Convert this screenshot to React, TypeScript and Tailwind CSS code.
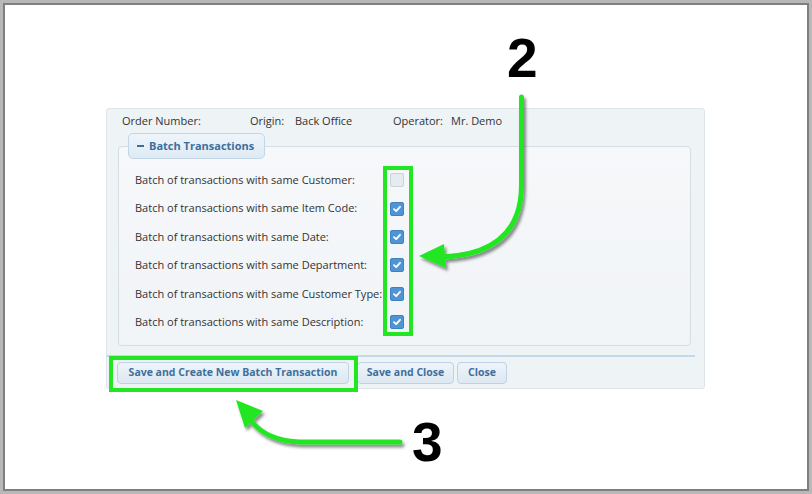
import React from 'react';

const rows = [
  { label: 'Batch of transactions with same Customer:', checked: false },
  { label: 'Batch of transactions with same Item Code:', checked: true },
  { label: 'Batch of transactions with same Date:', checked: true },
  { label: 'Batch of transactions with same Department:', checked: true },
  { label: 'Batch of transactions with same Customer Type:', checked: true },
  { label: 'Batch of transactions with same Description:', checked: true },
];

const Checkbox = ({ checked }: { checked: boolean }) =>
  checked ? (
    <span className="flex h-[14px] w-[14px] items-center justify-center rounded-[2px] bg-[#4f95d6] border border-[#3f82c2]">
      <svg width="10" height="10" viewBox="0 0 10 10">
        <path d="M2 5.2 L4.2 7.2 L8 2.8" fill="none" stroke="#fff" strokeWidth="1.8" strokeLinecap="round" strokeLinejoin="round" />
      </svg>
    </span>
  ) : (
    <span className="block h-[14px] w-[14px] rounded-[2px] bg-[#e4ebf1] border border-[#c9d3dc]" />
  );

const App = () => {
  return (
    <div className="relative h-[494px] w-[812px] overflow-hidden border-[3px] border-[#b8b8b8] bg-white font-['Open_Sans',sans-serif]">
      <div className="h-full w-full border-2 border-[#7f7f7f] pl-[101px] pt-[103px]">
        {/* Dialog panel */}
        <div className="flex h-[281px] w-[599px] flex-col rounded-[3px] border border-[#dde4ea] bg-[#eef3f6] pt-[5px] text-[11px] text-[#333]">
          <div className="flex h-[14px] items-center whitespace-nowrap pl-[15px] leading-[14px]">
            <span className="w-[128px]">Order Number:</span>
            <span className="w-[45px]">Origin:</span>
            <span className="w-[98px]">Back Office</span>
            <span className="w-[58px]">Operator:</span>
            <span>Mr. Demo</span>
          </div>

          <fieldset className="mt-[5px] ml-[11px] mr-[13px] rounded-[4px] border border-[#d6dee5] bg-gradient-to-b from-[#f6f8fa] to-[#f1f4f7] pl-[9px]">
            <legend className="flex h-[26px] items-center whitespace-nowrap rounded-[5px] border border-[#c2d6e8] bg-gradient-to-b from-[#eef5fb] to-[#dfeaf4] pl-[8px] pr-[10px] text-[11px] font-bold text-[#3d6e9c]">
              <span className="mr-[5px] inline-block h-[2px] w-[7px] bg-[#3d6e9c]" />
              Batch Transactions
            </legend>
            <div className="flex flex-col pb-[9px] pl-[7px] pt-[7px]">
              {rows.map((r) => (
                <div key={r.label} className="flex h-[28.4px] items-center whitespace-nowrap">
                  <span className="w-[255px]">{r.label}</span>
                  <Checkbox checked={r.checked} />
                </div>
              ))}
            </div>
          </fieldset>

          <div className="mt-[9px] mr-[9px] h-[2px] bg-[#c3d8ea]" />

          <div className="mt-[5px] flex whitespace-nowrap pl-[10px] text-[10.5px] font-bold text-[#3f6f9b]">
            <button className="h-[22px] w-[232px] rounded-[4px] border border-[#bfd2e3] bg-gradient-to-b from-[#eef4f9] to-[#dde8f2]">
              Save and Create New Batch Transaction
            </button>
            <button className="ml-[8px] h-[22px] w-[97px] rounded-[4px] border border-[#bfd2e3] bg-gradient-to-b from-[#eef4f9] to-[#dde8f2]">
              Save and Close
            </button>
            <button className="ml-[3px] h-[22px] w-[50px] rounded-[4px] border border-[#bfd2e3] bg-gradient-to-b from-[#eef4f9] to-[#dde8f2]">
              Close
            </button>
          </div>
        </div>
      </div>

      {/* Annotation overlay */}
      <div className="pointer-events-none absolute left-[380px] top-[163px] h-[170px] w-[30px] border-4 border-[#22e622]" />
      <div className="pointer-events-none absolute left-[106px] top-[353px] h-[36px] w-[249px] border-4 border-[#22e622]" />

      <span className="absolute left-[504px] top-[28px] font-['Liberation_Sans',sans-serif] text-[55px] font-bold leading-none text-black">
        2
      </span>
      <span className="absolute left-[409px] top-[412px] font-['Liberation_Sans',sans-serif] text-[55px] font-bold leading-none text-black">
        3
      </span>

      <svg className="pointer-events-none absolute left-[-3px] top-[-3px]" width="812" height="494" viewBox="0 0 812 494">
        <defs>
          <filter id="sh" x="-20%" y="-20%" width="140%" height="140%">
            <feDropShadow dx="2" dy="3" stdDeviation="1.5" floodColor="#000" floodOpacity="0.45" />
          </filter>
        </defs>
        <g filter="url(#sh)">
          <path d="M521.5 97 L521.5 185 Q521.5 254 442 257" fill="none" stroke="#22e622" strokeWidth="5" strokeLinecap="round" />
          <polygon points="419,256 444,244 446,268" fill="#22e622" />
          <path d="M400 442 L300 442 Q268 441 252 422" fill="none" stroke="#22e622" strokeWidth="5" strokeLinecap="round" />
          <polygon points="236,400 263,411 245,428" fill="#22e622" />
        </g>
      </svg>
    </div>
  );
};

export default App;
